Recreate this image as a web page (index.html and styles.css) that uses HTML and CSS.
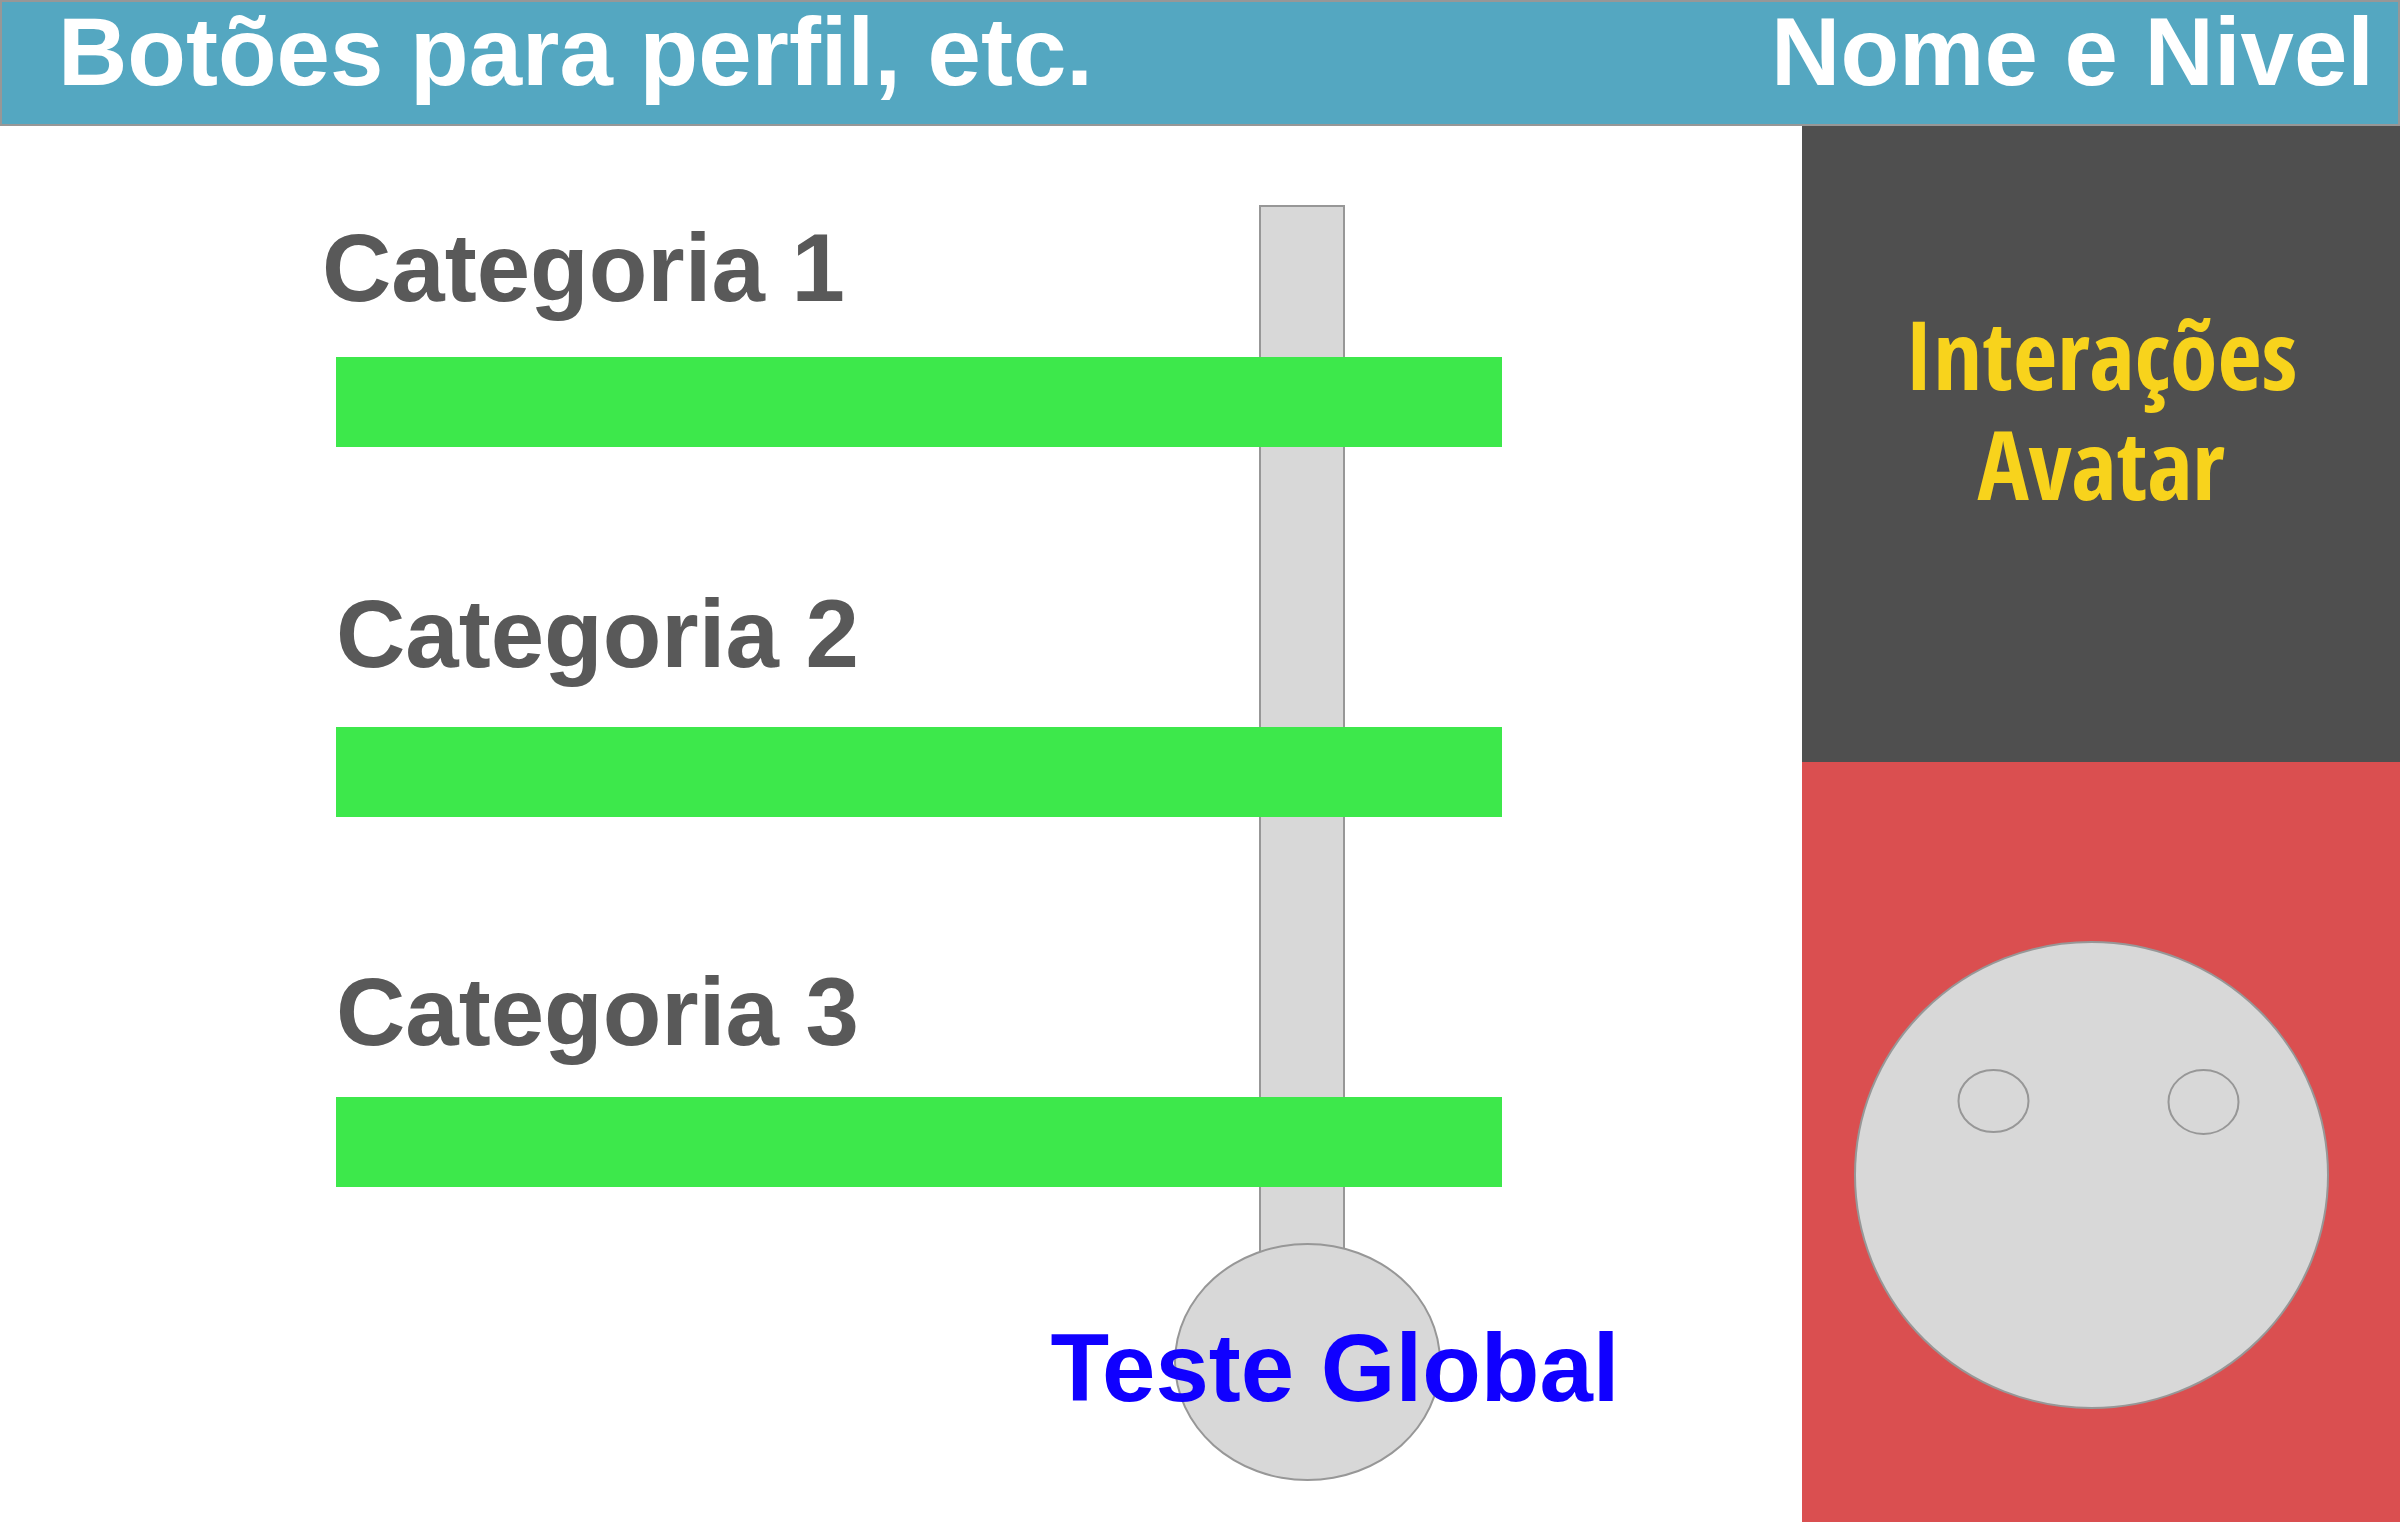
FILE: index.html
```html
<!DOCTYPE html>
<html lang="pt">
<head>
  <meta charset="utf-8">
  <meta name="viewport" content="width=device-width, initial-scale=1">
  <title>Categorias</title>
  <link rel="stylesheet" href="styles.css">
</head>
<body>
  <header class="topbar">
    <span>Botões para perfil, etc.</span>
    <span>Nome e Nivel</span>
  </header>
  <div class="layout">
    <main class="board">
      <div class="categories">
        <section class="category category-lead">
          <h2 class="category-title">Categoria 1</h2>
          <div class="category-bar"></div>
        </section>
        <section class="category category-loose">
          <h2 class="category-title">Categoria 2</h2>
          <div class="category-bar"></div>
        </section>
        <section class="category category-tight">
          <h2 class="category-title">Categoria 3</h2>
          <div class="category-bar"></div>
        </section>
      </div>
      <button class="global-test" type="button">Teste Global</button>
    </main>
    <aside class="sidebar">
      <section class="interactions">
        <p class="interactions-text">Interações<br>Avatar</p>
      </section>
      <section class="avatar">
        <svg class="avatar-face" viewBox="0 0 475 468" role="img" aria-label="Avatar">
          <g fill="#d8d8d8" stroke="#979797" stroke-width="2">
            <ellipse cx="237.5" cy="234" rx="236.5" ry="233"/>
            <ellipse cx="139.5" cy="160" rx="35" ry="31"/>
            <ellipse cx="349.5" cy="161" rx="35" ry="32"/>
          </g>
        </svg>
      </section>
    </aside>
  </div>
</body>
</html>
```

FILE: styles.css
```css
*,
*::before {
  box-sizing: border-box;
}

body {
  margin: 0;
  min-height: 100vh;
  display: flex;
  flex-direction: column;
  background: #fff;
  font-family: "Liberation Sans", Arial, sans-serif;
  font-size: 96px;
  font-weight: 700;
  line-height: 110px;
}

.topbar {
  display: flex;
  justify-content: space-between;
  height: 126px;
  padding: 0 24px 0 56px;
  border: 2px solid #979797;
  background: #54a7c1;
  color: #fff;
  line-height: 100px;
}

.layout {
  flex: 1;
  display: grid;
  grid-template-columns: 1802fr 598fr;
}

.board {
  position: relative;
  z-index: 0;
  display: flex;
  flex-direction: column;
  gap: 56px;
  padding: 83px 0 40px;
}

/* Vertical rail that links the categories to the global test */
.board::before {
  content: "";
  position: absolute;
  z-index: -1;
  top: 79px;
  right: 457px;
  bottom: 120px;
  width: 86px;
  border: 2px solid #979797;
  background: #d8d8d8;
}

.categories {
  display: flex;
  flex-direction: column;
  gap: 132px;
  padding: 0 300px 0 336px;
}

.category {
  display: flex;
  flex-direction: column;
  justify-content: flex-end;
  gap: 34px;
  min-height: 238px;
}

.category-loose {
  gap: 38px;
}

.category-tight {
  gap: 30px;
}

.category-title {
  margin: 0;
  color: #595959;
  font-size: inherit;
}

.category-lead .category-title {
  margin-left: -14px;
}

.category-bar {
  height: 90px;
  background: #3de84b;
}

.global-test {
  position: relative;
  z-index: 0;
  align-self: flex-end;
  width: 570px;
  margin-right: 182px;
  padding: 70px 0 58px;
  border: 0;
  background: none;
  color: #1000ff;
  font: inherit;
  white-space: nowrap;
  cursor: pointer;
}

.global-test::before {
  content: "";
  position: absolute;
  z-index: -1;
  inset: 0 179px 0 124px;
  border: 2px solid #979797;
  border-radius: 50%;
  background: #d8d8d8;
}

.sidebar {
  display: grid;
  grid-template-rows: 636fr 760fr;
}

.interactions {
  padding-top: 172px;
  background: #4f4f4f;
}

.interactions-text {
  margin: 0;
  color: #f8d31c;
  font-family: "Open Sans Condensed", "Liberation Sans Narrow", Lato, sans-serif;
  text-align: center;
}

.avatar {
  padding: 179px 71px 0 52px;
  background: #da4f50;
}

.avatar-face {
  display: block;
  width: 100%;
}
```
